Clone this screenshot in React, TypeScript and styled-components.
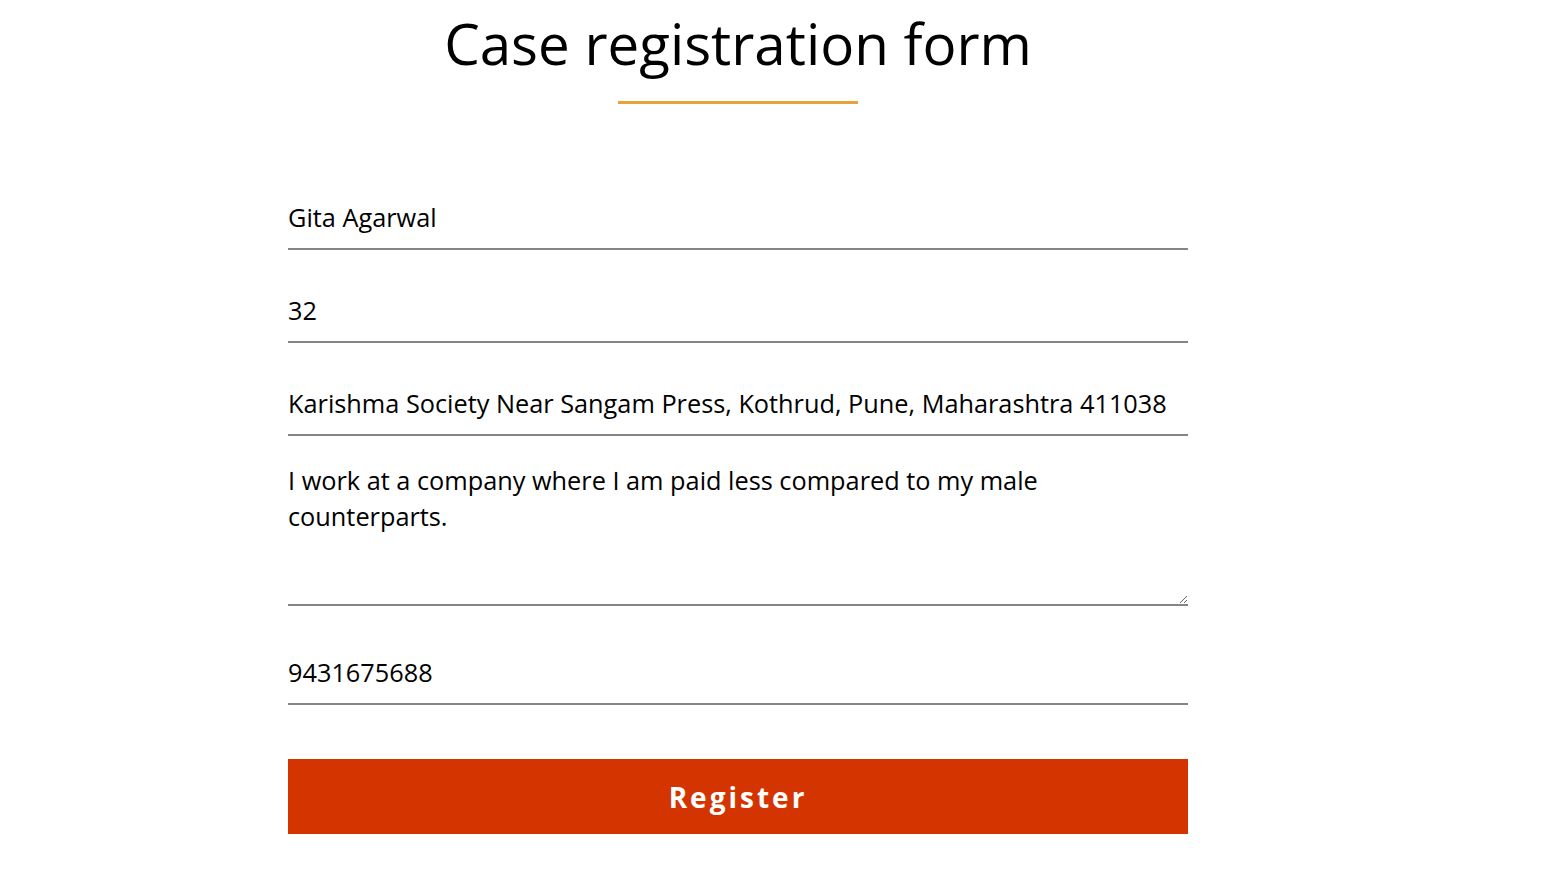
import React from "react";
import styled, { createGlobalStyle } from "styled-components";

const Global = createGlobalStyle`
  html, body { margin: 0; padding: 0; background: #ffffff; }
  body { font-family: "Open Sans", "Noto Sans", sans-serif; color: #000; }
`;

const Page = styled.div`
  width: 1476px;
  display: flex;
  flex-direction: column;
  align-items: center;
`;

const Title = styled.h1`
  margin: 0;
  padding-top: 5px;
  font-size: 56.5px;
  font-weight: 400;
  line-height: 78px;
  color: #000;
`;

const Accent = styled.div`
  width: 240px;
  height: 3px;
  margin-top: 18px;
  background: #e9a23b;
`;

const Form = styled.form`
  width: 900px;
  display: flex;
  flex-direction: column;
  margin-top: 82px;
`;

const Input = styled.input<{ $gap: number }>`
  box-sizing: border-box;
  width: 100%;
  height: 64px;
  margin: ${(p) => p.$gap}px 0 0 0;
  padding: 0;
  border: none;
  border-bottom: 2px solid #858585;
  outline: none;
  background: transparent;
  font-family: "Open Sans", "Noto Sans", sans-serif;
  font-size: 25.3px;
  color: #000;
`;

const TextArea = styled.textarea`
  box-sizing: border-box;
  width: 100%;
  height: 144px;
  margin: 26px 0 0 0;
  padding: 0;
  border: none;
  border-bottom: 2px solid #858585;
  outline: none;
  background: transparent;
  resize: vertical;
  font-family: "Open Sans", "Noto Sans", sans-serif;
  font-size: 25.3px;
  line-height: 36px;
  color: #000;
`;

const Button = styled.button`
  box-sizing: border-box;
  width: 100%;
  height: 75px;
  margin-top: 54px;
  border: none;
  background: #d43500;
  color: #fff;
  font-family: "Open Sans", "Noto Sans", sans-serif;
  font-weight: 700;
  font-size: 28px;
  letter-spacing: 3px;
  cursor: pointer;
`;

export default function App() {
  return (
    <>
      <Global />
      <Page>
        <Title>Case registration form</Title>
        <Accent />
        <Form onSubmit={(e) => e.preventDefault()}>
          <Input $gap={0} defaultValue="Gita Agarwal" />
          <Input $gap={29} defaultValue="32" />
          <Input
            $gap={29}
            defaultValue="Karishma Society Near Sangam Press, Kothrud, Pune, Maharashtra 411038"
          />
          <TextArea defaultValue="I work at a company where I am paid less compared to my male counterparts." />
          <Input $gap={35} defaultValue="9431675688" />
          <Button type="submit">Register</Button>
        </Form>
      </Page>
    </>
  );
}
